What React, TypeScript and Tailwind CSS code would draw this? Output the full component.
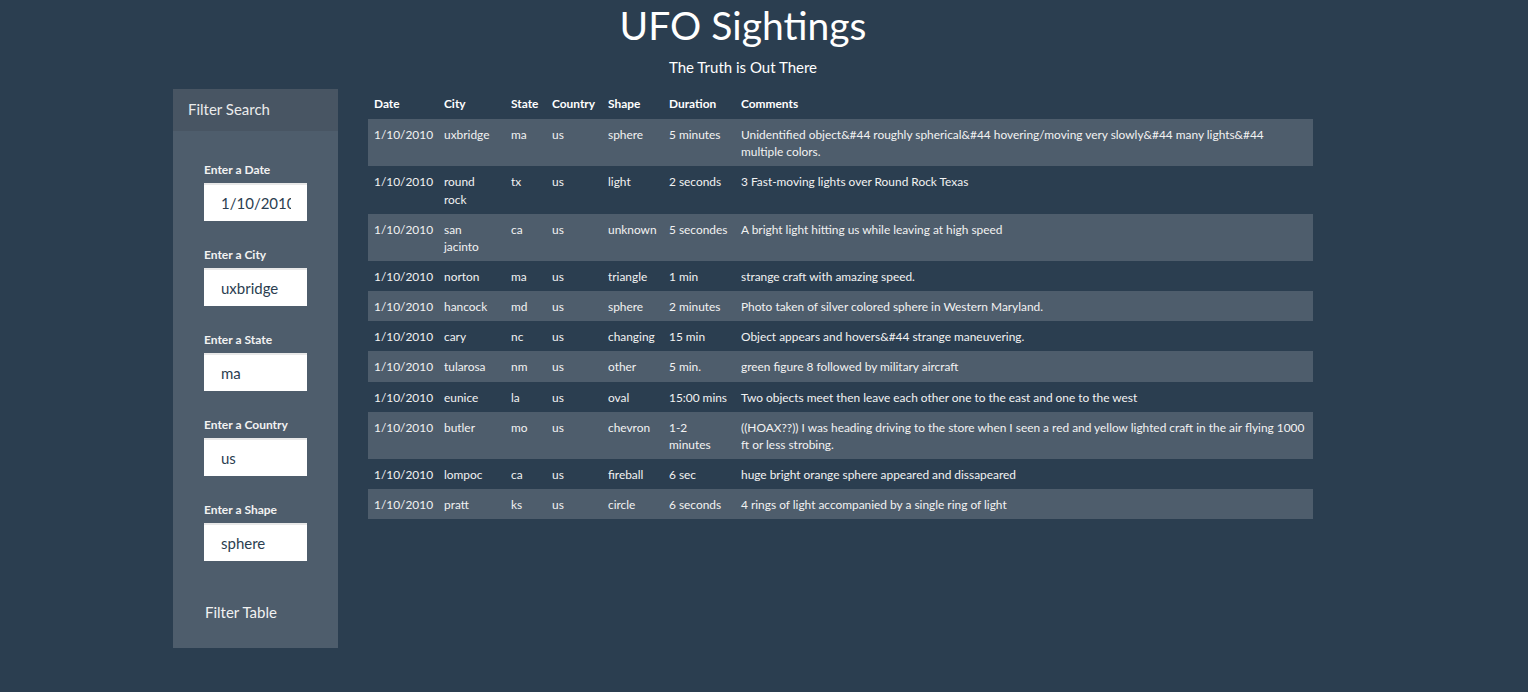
import React from 'react';

const rows = [
  ['1/10/2010', 'uxbridge', 'ma', 'us', 'sphere', '5 minutes', 'Unidentified object&#44 roughly spherical&#44 hovering/moving very slowly&#44 many lights&#44 multiple colors.'],
  ['1/10/2010', 'round rock', 'tx', 'us', 'light', '2 seconds', '3 Fast-moving lights over Round Rock Texas'],
  ['1/10/2010', 'san jacinto', 'ca', 'us', 'unknown', '5 secondes', 'A bright light hitting us while leaving at high speed'],
  ['1/10/2010', 'norton', 'ma', 'us', 'triangle', '1 min', 'strange craft with amazing speed.'],
  ['1/10/2010', 'hancock', 'md', 'us', 'sphere', '2 minutes', 'Photo taken of silver colored sphere in Western Maryland.'],
  ['1/10/2010', 'cary', 'nc', 'us', 'changing', '15 min', 'Object appears and hovers&#44 strange maneuvering.'],
  ['1/10/2010', 'tularosa', 'nm', 'us', 'other', '5 min.', 'green figure 8 followed by military aircraft'],
  ['1/10/2010', 'eunice', 'la', 'us', 'oval', '15:00 mins', 'Two objects meet then leave each other one to the east and one to the west'],
  ['1/10/2010', 'butler', 'mo', 'us', 'chevron', '1-2 minutes', '((HOAX??)) I was heading driving to the store when I seen a red and yellow lighted craft in the air flying 1000 ft or less strobing.'],
  ['1/10/2010', 'lompoc', 'ca', 'us', 'fireball', '6 sec', 'huge bright orange sphere appeared and dissapeared'],
  ['1/10/2010', 'pratt', 'ks', 'us', 'circle', '6 seconds', '4 rings of light accompanied by a single ring of light'],
];

const filters = [
  { label: 'Enter a Date', value: '1/10/2010' },
  { label: 'Enter a City', value: 'uxbridge' },
  { label: 'Enter a State', value: 'ma' },
  { label: 'Enter a Country', value: 'us' },
  { label: 'Enter a Shape', value: 'sphere' },
];

const headers = ['Date', 'City', 'State', 'Country', 'Shape', 'Duration', 'Comments'];
const widths = ['w-[70px]', 'w-[67px]', 'w-[41px]', 'w-[56px]', 'w-[61px]', 'w-[72px]', 'w-auto'];

export default function App() {
  return (
    <div
      className="min-h-[692px] w-full bg-[#2b3e50] text-[#f2f2f2]"
      style={{ fontFamily: 'Lato, "Open Sans", sans-serif' }}
    >
      <div className="w-[1140px] ml-[173px]">
        <h1 className="pt-[4px] text-center text-[39px] leading-[43px] font-normal text-white">
          UFO Sightings
        </h1>
        <p className="mt-[10px] text-center text-[15px] leading-[21px] text-white">The Truth is Out There</p>

        <div className="mt-[11px] flex gap-[30px] items-start">
          <aside className="w-[165px] shrink-0 bg-[#4e5d6c]">
            <div className="bg-[#485563] px-[15px] pb-[2px] h-[42px] flex items-center text-[15px] text-[#ebebeb]">
              Filter Search
            </div>
            <div className="pl-[31px] pt-[30px] pb-[24px]">
              <div className="flex flex-col gap-[25px]">
                {filters.map((f) => (
                  <div key={f.label} className="flex flex-col">
                    <label className="text-[12px] leading-[17px] font-bold text-[#f2f2f2] mb-[5px]">{f.label}</label>
                    <input
                      defaultValue={f.value}
                      className="w-[103px] h-[38px] bg-white text-[#2b3e50] text-[15px] pl-[17px] pr-[16px] border-t-2 border-[#e8e8e8] outline-none"
                      style={{ fontFamily: 'Lato, "Open Sans", sans-serif' }}
                    />
                  </div>
                ))}
              </div>
              <button className="mt-[41px] text-[15px] leading-[21px] text-[#f2f2f2] pl-[1px]">Filter Table</button>
            </div>
          </aside>

          <table className="w-[945px] table-fixed border-collapse text-[11.9px] leading-[17.14px]">
            <colgroup>
              {widths.map((w, i) => (
                <col key={i} className={w} />
              ))}
            </colgroup>
            <thead>
              <tr>
                {headers.map((h) => (
                  <th key={h} className="text-left font-bold px-[6px] pt-[6px] pb-[7px] text-white">
                    {h}
                  </th>
                ))}
              </tr>
            </thead>
            <tbody>
              {rows.map((r, i) => (
                <tr key={i} className={i % 2 === 0 ? 'bg-[#4e5d6c]' : ''}>
                  {r.map((c, j) => (
                    <td key={j} className="align-top px-[6px] pt-[7px] pb-[6px]">
                      {c}
                    </td>
                  ))}
                </tr>
              ))}
            </tbody>
          </table>
        </div>
      </div>
    </div>
  );
}
